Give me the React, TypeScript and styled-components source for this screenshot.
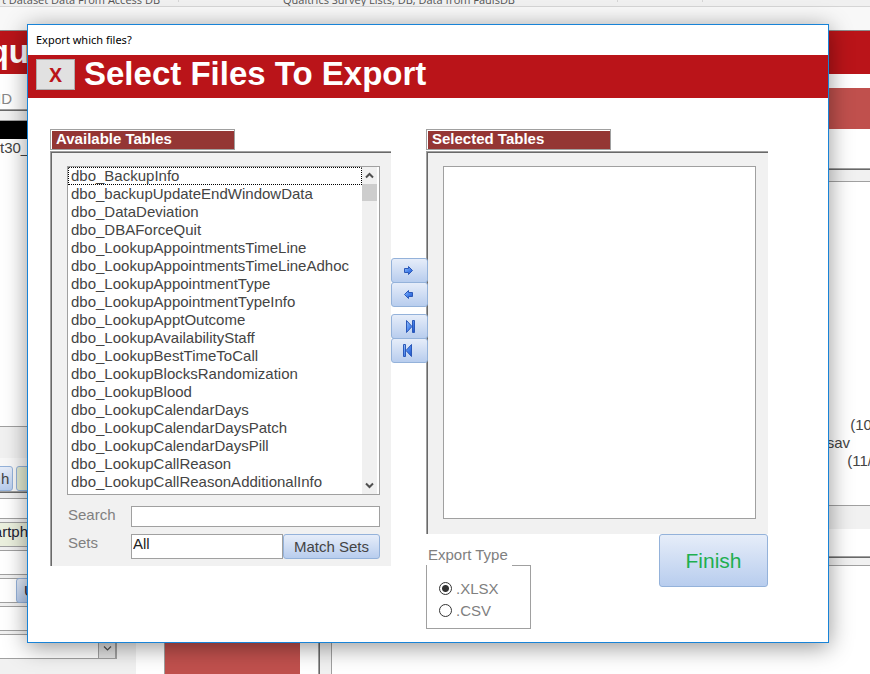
import React from "react";
import styled, { createGlobalStyle, css } from "styled-components";

const edge = "#a0a0a0";
const edgeDark = "#696969";
const panelGrey = "#f1f1f1";
const crimson = "#ba1419";

const GlobalStyle = createGlobalStyle`
  * { box-sizing: border-box; }
  body {
    margin: 0;
    background: #fff;
    color: #444;
    font: 15px/18px "Liberation Sans", Arial, sans-serif;
  }
  button, input, select { font: inherit; color: inherit; margin: 0; }
`;

const glossy = css`
  border: 1px solid #94b2da;
  border-radius: 3px;
  background: linear-gradient(#e6edf9, #b8cdee);
`;

const sunken = css`
  background: ${panelGrey};
  border-top: 1px solid ${edge};
  border-left: 1px solid ${edge};
  box-shadow: inset 1px 1px ${edgeDark};
`;

/* Main window behind the dialog */

const Page = styled.div`
  position: relative;
  height: 100vh;
  min-height: 674px;
  display: flex;
  flex-direction: column;
  overflow: hidden;
`;

const Ribbon = styled.div`
  flex: none;
  height: 7px;
  display: grid;
  grid-template-columns: 178px 105px 334px 85px 1fr;
  align-items: end;
  overflow: hidden;
  background: #f0f0f0;
  border-bottom: 1px solid #d5d5d5;
  color: #555;
  font: 11px/16px "Open Sans", sans-serif;
  white-space: nowrap;
`;

const RibbonCell = styled.span<{ $end?: boolean; $divider?: boolean }>`
  display: flex;
  height: ${(p) => (p.$divider ? "2px" : "8px")};
  align-self: ${(p) => (p.$divider ? "start" : "end")};
  align-items: flex-end;
  justify-content: ${(p) => (p.$end ? "flex-end" : "flex-start")};
  padding-right: ${(p) => (p.$end ? "18px" : "0")};
  border-left: ${(p) => (p.$divider ? "1px solid #d5d5d5" : "none")};
`;

const ToolStrip = styled.div`
  flex: none;
  height: 24px;
  background: #f8f8f8;
  border-bottom: 1px solid #8d8d8d;
`;

const Banner = styled.div`
  flex: none;
  height: 43px;
  background: ${crimson};
`;

const Clip = styled.div<{ $width: number }>`
  width: ${(p) => p.$width}px;
  display: flex;
  justify-content: flex-end;
  overflow: hidden;
  white-space: nowrap;
`;

const BannerText = styled(Clip)`
  color: #fff;
  font-size: 33px;
  line-height: 41px;
  font-weight: bold;
`;

const Columns = styled.div`
  flex: 1;
  display: flex;
  min-height: 0;
`;

const SideColumn = styled.div`
  width: 136px;
  display: flex;
  flex-direction: column;
`;

const SideLabel = styled.div`
  height: 35px;
  padding-top: 16px;
  color: #888;
`;

const SideList = styled.div`
  ${sunken}
  height: 349px;
  margin-left: -2px;
  padding: 10px 0 0 1px;
`;

const SideListBody = styled.div`
  height: 307px;
  background: #fff;
  border-top: 1px solid ${edge};
  border-bottom: 1px solid ${edge};
`;

const SelectedRow = styled.div`
  height: 18px;
  background: #000;
`;

const SideActions = styled.div`
  height: 33px;
  display: flex;
  gap: 3px;
  margin-left: -5px;
  padding-top: 8px;
  background: #f8f8f8;
`;

const SideButton = styled.button<{ $green?: boolean; $width: number }>`
  ${glossy}
  width: ${(p) => p.$width}px;
  height: 25px;
  padding: 0 5px;
  text-align: right;
  ${(p) => p.$green && "background: #e3ebd3;"}
`;

const SideForm = styled.div`
  ${sunken}
  flex: 1;
  display: flex;
  flex-direction: column;
  gap: 3px;
  padding: 6px 19px 0 0;
  margin-left: -2px;
`;

const SideField = styled.div<{ $green?: boolean; $short?: boolean }>`
  height: ${(p) => (p.$short ? "21px" : "25px")};
  display: flex;
  justify-content: space-between;
  background: ${(p) => (p.$green ? "#ebf0de" : "#fff")};
  border: 1px solid ${edge};
  color: #223;
`;

const FieldButton = styled.button`
  ${glossy}
  margin: -1px 0 -1px 16px;
  padding: 0 7px;
  height: 25px;
`;

const DropButton = styled.button`
  width: 18px;
  height: 24px;
  margin-left: auto;
  padding: 0;
  background: #e1e1e1;
  border: 1px solid ${edge};
`;

const MiddleColumn = styled.div`
  width: 136px;
  margin: 0 18px 0 28px;
  padding-top: 543px;
`;

const RedTile = styled.div`
  height: 57px;
  background: #c0504d;
  border-left: 1px solid ${edge};
`;

const MainColumn = styled.div`
  flex: 1;
  display: flex;
  flex-direction: column;
  padding-top: 14px;
`;

const RedBar = styled.div`
  height: 41px;
  margin-bottom: 39px;
  background: #c0504d;
`;

const MainPanel = styled.div<{ $grow?: boolean }>`
  ${sunken}
  padding: ${(p) => (p.$grow ? "8px 0 0 12px" : "12px 0 23px 12px")};
  margin-bottom: ${(p) => (p.$grow ? "0" : "27px")};
  flex: ${(p) => (p.$grow ? "1" : "none")};
`;

const MainList = styled.div<{ $grow?: boolean }>`
  height: ${(p) => (p.$grow ? "100%" : "325px")};
  padding-top: 234px;
  background: #fff;
  border: 1px solid ${edge};
  border-right: 0;
  ${(p) => p.$grow && "border-bottom: 0; padding-top: 0;"}
`;

const FileLine = styled.div<{ $reach: number }>`
  width: calc(100% - ${(p) => p.$reach}px);
  display: flex;
  justify-content: flex-end;
  white-space: nowrap;
`;

/* Dialog */

const Dialog = styled.section`
  position: absolute;
  top: 24px;
  left: 27px;
  right: 41px;
  padding-bottom: 13px;
  background: #fff;
  border: 1px solid #1883d7;
  box-shadow: 0 4px 22px rgba(0, 0, 0, 0.42);
`;

const TitleBar = styled.div`
  height: 30px;
  padding-left: 8px;
  color: #000;
  font: 11px/30px "Noto Sans", sans-serif;
`;

const DialogHeader = styled.header`
  height: 43px;
  display: flex;
  gap: 9px;
  padding: 4px 8px;
  background: ${crimson};
`;

const CloseButton = styled.button`
  width: 39px;
  height: 31px;
  padding: 0;
  background: #e1e1e1;
  border: 1px solid #adadad;
  color: ${crimson};
  font: bold 19px/28px "Open Sans", sans-serif;
`;

const DialogTitle = styled.h1`
  margin: 0;
  color: #fff;
  font-size: 33px;
  line-height: 30px;
  white-space: nowrap;
`;

const DialogBody = styled.div`
  display: grid;
  grid-template-columns: minmax(0, 341fr) 35px minmax(0, 342fr);
  padding: 31px 60px 0 22px;
`;

const TabFrame = styled.div`
  width: 185px;
  height: 21px;
  margin-bottom: 1px;
  padding: 1px 0 0 1px;
  border: 1px solid ${edge};
`;

const TabLabel = styled.h2`
  height: 18px;
  margin: 0;
  padding-left: 4px;
  background: #943634;
  color: #fff;
  font-size: 15px;
  line-height: 16px;
`;

const Panel = styled.div<{ $wide?: boolean }>`
  ${sunken}
  padding: 14px ${(p) => (p.$wide ? "12px" : "11px")} 7px 16px;
`;

const ListFrame = styled.div<{ $tall?: boolean }>`
  height: ${(p) => (p.$tall ? "353px" : "329px")};
  margin-bottom: ${(p) => (p.$tall ? "8px" : "11px")};
  display: flex;
  background: #fff;
  border: 1px solid ${edge};
`;

const ListBox = styled.select`
  flex: 1;
  min-width: 0;
  height: 100%;
  padding: 0;
  overflow: hidden;
  appearance: none;
  background: #fff;
  border: 0;
  outline: 0;
  scrollbar-width: none;

  option {
    height: 18px;
    min-height: 18px;
    padding: 0 3px;
    line-height: 18px;
  }
  option[data-focused="true"] {
    outline: 1px dotted #000;
    outline-offset: -1px;
  }
`;

const ScrollTrack = styled.div`
  width: 15px;
  margin-right: 2px;
  display: flex;
  flex-direction: column;
  background: #f0f0f0;
`;

const ScrollArrow = styled.button`
  height: 17px;
  padding: 0;
  display: grid;
  place-items: center;
  background: none;
  border: 0;
`;

const ScrollThumb = styled.div`
  height: 17px;
  margin-bottom: auto;
  background: #cdcdcd;
`;

const Filters = styled.div`
  display: grid;
  grid-template-columns: 64px 1fr;
  row-gap: 7px;
  color: #808080;
`;

const FilterLabel = styled.label`
  padding-left: 1px;
`;

const SearchInput = styled.input`
  width: 100%;
  height: 21px;
  padding: 0 2px;
  background: #fff;
  border: 1px solid ${edge};
  outline: 0;
`;

const SetRow = styled.div`
  display: flex;
  color: #222;
`;

const SetSelect = styled.select`
  flex: 1;
  min-width: 0;
  height: 25px;
  padding: 0 1px 5px;
  appearance: none;
  background: #fff;
  border: 1px solid ${edge};
  border-radius: 0;
`;

const MatchButton = styled.button`
  ${glossy}
  width: 97px;
  height: 25px;
  padding: 0;
  color: #444;
`;

const Transfer = styled.div`
  position: relative;
  z-index: 1;
  width: 37px;
  padding-top: 129px;
  display: flex;
  flex-direction: column;
  gap: 7px;
`;

const TransferPair = styled.div`
  display: flex;
  flex-direction: column;
`;

const TransferButton = styled.button`
  ${glossy}
  height: 25px;
  padding: 0 2px 1px 0;
  display: grid;
  place-items: center;

  & + & {
    margin-top: -1px;
  }
`;

const Footer = styled.div`
  display: flex;
  justify-content: space-between;
  align-items: flex-start;
`;

const ExportGroup = styled.fieldset`
  min-width: 0;
  width: 105px;
  margin: 12px 0 0;
  padding: 0;
  border: 0;
  color: #808080;
`;

const ExportLegend = styled.legend`
  padding: 0 0 0 2px;
  margin-bottom: 1px;
`;

const ExportFrame = styled.div`
  height: 64px;
  padding: 14px 0 0 12px;
  border: 1px solid ${edge};
  border-top: 0;
  background: linear-gradient(${edge}, ${edge}) top right / 18px 1px no-repeat;
`;

const RadioLabel = styled.label`
  height: 22px;
  display: flex;
  gap: 4px;
  line-height: 20px;
`;

const Radio = styled.input`
  appearance: none;
  width: 13px;
  height: 13px;
  margin: 3px 0 0;
  border: 1px solid #333;
  border-radius: 50%;
  background: #fff;

  &:checked {
    background: radial-gradient(circle, #333 3px, #fff 4px);
  }
`;

const FinishButton = styled.button`
  ${glossy}
  width: 109px;
  height: 53px;
  padding: 0;
  color: #1faf50;
  font-size: 21px;
`;

const tables = [
  "BackupInfo",
  "backupUpdateEndWindowData",
  "DataDeviation",
  "DBAForceQuit",
  "LookupAppointmentsTimeLine",
  "LookupAppointmentsTimeLineAdhoc",
  "LookupAppointmentType",
  "LookupAppointmentTypeInfo",
  "LookupApptOutcome",
  "LookupAvailabilityStaff",
  "LookupBestTimeToCall",
  "LookupBlocksRandomization",
  "LookupBlood",
  "LookupCalendarDays",
  "LookupCalendarDaysPatch",
  "LookupCalendarDaysPill",
  "LookupCallReason",
  "LookupCallReasonAdditionalInfo",
];

function Chevron({ up, thin }: { up?: boolean; thin?: boolean }) {
  return (
    <svg width="9" height="7" viewBox="0 0 9 7" fill="none" stroke="#505050" strokeWidth={thin ? 1.2 : 2}>
      <path d={up ? "M1 5.5 4.5 2 8 5.5" : "M1 1.5 4.5 5 8 1.5"} />
    </svg>
  );
}

type Move = "add" | "remove" | "addAll" | "removeAll";

const moveIcons: Record<Move, { width: number; height: number; viewBox: string; path: string }> = {
  add: { width: 9, height: 9, viewBox: "0 0 9 9", path: "M.5 2.5h4v-2l4 4-4 4v-2h-4z" },
  remove: { width: 9, height: 9, viewBox: "0 0 9 9", path: "M8.5 2.5h-4v-2l-4 4 4 4v-2h4z" },
  addAll: { width: 15, height: 13, viewBox: "-5 0 15 13", path: "M.5.5 6 6.5.5 12.5zM6.500.5h2v12h-2z" },
  removeAll: { width: 15, height: 13, viewBox: "-2 0 15 13", path: "M8.5.5 3 6.500 8.5 12.5zM.5.5h2v12h-2z" },
};

function MoveIcon({ move }: { move: Move }) {
  const { width, height, viewBox, path } = moveIcons[move];
  return (
    <svg width={width} height={height} viewBox={viewBox}>
      <defs>
        <linearGradient id={`fill-${move}`} x1="0" y1="0" x2="1" y2="1">
          <stop offset="0" stopColor="#9cc4fa" />
          <stop offset="0.5" stopColor="#4a86ee" />
          <stop offset="1" stopColor="#1c4fc4" />
        </linearGradient>
      </defs>
      <path d={path} fill={`url(#fill-${move})`} stroke="#2b58b8" strokeWidth="1" />
    </svg>
  );
}

function MoveButton({ move, label }: { move: Move; label: string }) {
  return (
    <TransferButton type="button" aria-label={label}>
      <MoveIcon move={move} />
    </TransferButton>
  );
}

function MainWindow() {
  return (
    <>
      <Ribbon>
        <RibbonCell $end>Import Dataset Data From Access DB</RibbonCell>
        <RibbonCell $divider />
        <RibbonCell>Qualtrics Survey Lists, DB, Data from FaulsDB</RibbonCell>
        <RibbonCell $divider />
        <RibbonCell $divider />
      </Ribbon>
      <ToolStrip />
      <Banner>
        <BannerText $width={29}>qu</BannerText>
      </Banner>
      <Columns>
        <SideColumn>
          <SideLabel>
            <Clip $width={12}>ID</Clip>
          </SideLabel>
          <SideList>
            <SideListBody>
              <SelectedRow />
              t30_
            </SideListBody>
          </SideList>
          <SideActions>
            <SideButton type="button" $width={18}>h</SideButton>
            <SideButton type="button" $width={60} $green aria-label="Go" />
          </SideActions>
          <SideForm>
            <SideField $short />
            <SideField $green>
              <Clip $width={28}>artph</Clip>
            </SideField>
            <SideField />
            <SideField>
              <FieldButton type="button">U</FieldButton>
            </SideField>
            <SideField />
            <SideField>
              <DropButton type="button" aria-label="Open list">
                <Chevron thin />
              </DropButton>
            </SideField>
          </SideForm>
        </SideColumn>
        <MiddleColumn>
          <RedTile />
        </MiddleColumn>
        <MainColumn>
          <RedBar />
          <MainPanel>
            <MainList>
              <FileLine $reach={-6}>(10/</FileLine>
              <FileLine $reach={20}>.sav</FileLine>
              <FileLine $reach={-2}>(11/</FileLine>
            </MainList>
          </MainPanel>
          <MainPanel $grow>
            <MainList $grow />
          </MainPanel>
        </MainColumn>
      </Columns>
    </>
  );
}

function ExportDialog() {
  return (
    <Dialog role="dialog" aria-labelledby="dialog-title">
      <TitleBar>Export which files?</TitleBar>
      <DialogHeader>
        <CloseButton type="button" aria-label="Close">X</CloseButton>
        <DialogTitle id="dialog-title">Select Files To Export</DialogTitle>
      </DialogHeader>
      <DialogBody>
        <div>
          <TabFrame>
            <TabLabel id="available">Available Tables</TabLabel>
          </TabFrame>
          <Panel>
            <ListFrame>
              <ListBox size={18} aria-labelledby="available">
                {tables.map((name, i) => (
                  <option key={name} data-focused={i === 0}>{`dbo_${name}`}</option>
                ))}
              </ListBox>
              <ScrollTrack>
                <ScrollArrow type="button" aria-label="Scroll up"><Chevron up /></ScrollArrow>
                <ScrollThumb />
                <ScrollArrow type="button" aria-label="Scroll down"><Chevron /></ScrollArrow>
              </ScrollTrack>
            </ListFrame>
            <Filters>
              <FilterLabel htmlFor="search">Search</FilterLabel>
              <SearchInput id="search" type="text" />
              <FilterLabel htmlFor="sets">Sets</FilterLabel>
              <SetRow>
                <SetSelect id="sets" defaultValue="All">
                  <option>All</option>
                </SetSelect>
                <MatchButton type="button">Match Sets</MatchButton>
              </SetRow>
            </Filters>
          </Panel>
        </div>
        <Transfer>
          <TransferPair>
            <MoveButton move="add" label="Add" />
            <MoveButton move="remove" label="Remove" />
          </TransferPair>
          <TransferPair>
            <MoveButton move="addAll" label="Add all" />
            <MoveButton move="removeAll" label="Remove all" />
          </TransferPair>
        </Transfer>
        <div>
          <TabFrame>
            <TabLabel id="selected">Selected Tables</TabLabel>
          </TabFrame>
          <Panel $wide>
            <ListFrame $tall>
              <ListBox size={18} aria-labelledby="selected" />
            </ListFrame>
          </Panel>
          <Footer>
            <ExportGroup>
              <ExportLegend>Export Type</ExportLegend>
              <ExportFrame>
                <RadioLabel>
                  <Radio type="radio" name="type" defaultChecked />
                  .XLSX
                </RadioLabel>
                <RadioLabel>
                  <Radio type="radio" name="type" />
                  .CSV
                </RadioLabel>
              </ExportFrame>
            </ExportGroup>
            <FinishButton type="button">Finish</FinishButton>
          </Footer>
        </div>
      </DialogBody>
    </Dialog>
  );
}

export default function App() {
  return (
    <Page>
      <GlobalStyle />
      <MainWindow />
      <ExportDialog />
    </Page>
  );
}
